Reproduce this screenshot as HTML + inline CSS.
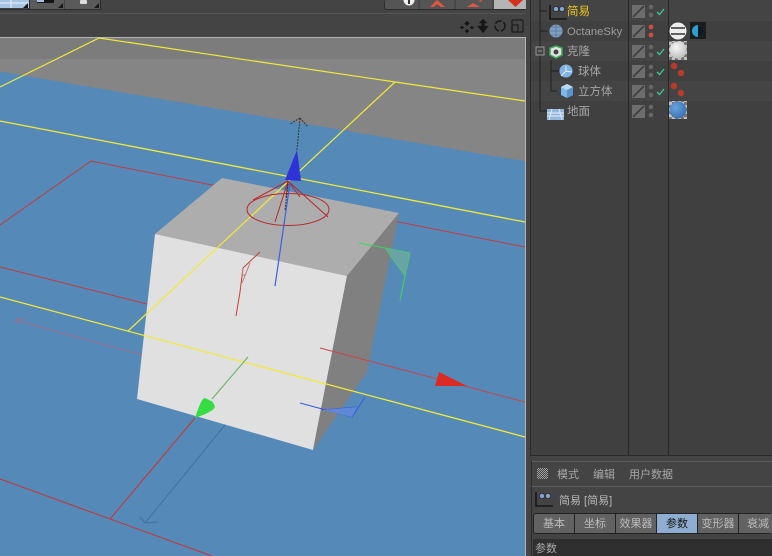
<!DOCTYPE html>
<html><head><meta charset="utf-8"><style>
html,body{margin:0;padding:0;background:#3c3c3c}
svg{display:block;font-family:"Liberation Sans","Noto Sans CJK SC",sans-serif}
</style></head><body>
<svg width="772" height="556" viewBox="0 0 772 556" xmlns="http://www.w3.org/2000/svg">
<defs>
<g id="check"><path d="M0 3l2.500 2.500L7 0" fill="none" stroke="#3fc79a" stroke-width="1.300"/></g>
<g id="lay"><rect width="13" height="13" fill="#6d6d6d"/><path d="M1 12L12 1" stroke="#3c3c3c" stroke-width="1.600"/></g>
<g id="dots"><circle cx="0" cy="0" r="2.300" fill="#666"/><circle cx="0" cy="8" r="2.300" fill="#666"/></g>
<g id="reds"><circle cx="0" cy="0" r="3.200" fill="#b93a28"/><circle cx="7" cy="7" r="3.200" fill="#b93a28"/></g>
<g id="simple"><path d="M0 0V14H17" fill="none" stroke="#161616" stroke-width="1.600"/><circle cx="6" cy="4" r="2.600" fill="#7fa5cf" stroke="#222" stroke-width=".7"/><circle cx="12" cy="4" r="2.600" fill="#7fa5cf" stroke="#222" stroke-width=".7"/></g>
<radialGradient id="ws" cx=".4" cy=".35" r=".7"><stop offset="0" stop-color="#f6f6f6"/><stop offset="1" stop-color="#bdbdbd"/></radialGradient>
<radialGradient id="bs" cx=".35" cy=".35" r=".75"><stop offset="0" stop-color="#66a2e2"/><stop offset="1" stop-color="#3a6ea8"/></radialGradient>
<pattern id="chk" width="6" height="6" patternUnits="userSpaceOnUse"><rect width="6" height="6" fill="#c0c0c0"/><rect width="3" height="3" fill="#777"/><rect x="3" y="3" width="3" height="3" fill="#777"/></pattern>
<pattern id="p" width="2" height="2" patternUnits="userSpaceOnUse"><rect width="1" height="1" fill="#a0a0a0"/><rect x="1" y="1" width="1" height="1" fill="#a0a0a0"/></pattern>
</defs>

<!-- top bar -->
<rect width="527" height="37" fill="#444"/>
<rect y="9" width="102" height="1" fill="#2e2e2e"/>
<rect y="13" width="527" height="1" fill="#555"/>
<rect x="0" width="29" height="8" fill="#a8c4e4"/>
<path d="M11 0V8M0 3H29" stroke="#eaf2fb" stroke-width="1"/>
<path d="M23 8l5-5v5z" fill="#181818"/>
<rect x="29" width="1" height="9" fill="#2c2c2c"/>
<rect x="30" width="34" height="9" fill="#5a5a5a"/>
<rect x="37" width="17" height="3" fill="#151515"/><rect x="37" width="7" height="2" fill="#a8c4e4"/>
<path d="M58 8l5-5v5z" fill="#181818"/>
<rect x="65" width="35" height="9" fill="#5a5a5a"/>
<rect x="80" width="7" height="4" rx="1" fill="#ddd"/>
<path d="M94 8l5-5v5z" fill="#181818"/>
<rect x="100" width="1" height="9" fill="#2c2c2c"/>

<rect x="384" width="143" height="10" rx="3" fill="#2c2c2c"/>
<rect x="385" width="141" height="9" rx="2" fill="#555"/>
<path d="M419 0v9M455 0v9M493 0v9" stroke="#3a3a3a"/>
<circle cx="409" cy="0" r="5.500" fill="#f0f0f0"/><rect x="408" y="0" width="2" height="4" fill="#333"/>
<path d="M430 7l7-7 8 7h-4l-4-3-3 3z" fill="#e5553f"/>
<path d="M467 7l6-4 7 4zM478 1l4-1v2z" fill="#d95a42"/>
<rect x="494" width="32" height="9" fill="#b5b5b5"/>
<path d="M508 0h15l-7.500 7z" fill="#d6301f"/>

<!-- viewport header icons -->
<g fill="#161616" stroke="#161616">
<path d="M467 21l2.500 2.500L467 26l-2.500-2.500zM467 29l2 2-2 2-2-2zM462 26l2 1.500-2 1.500-2-1.500zM472 26l2 1.500-2 1.500-2-1.500z" stroke-width=".4"/>
<path d="M483 19l4 4h-2.500v3h4L483 33l-5.500-7h4v-3H479z" stroke-width=".3"/>
</g>
<circle cx="500" cy="26" r="5" fill="none" stroke="#1c1c1c" stroke-width="1.700" stroke-dasharray="7 2"/>
<rect x="512" y="20" width="11" height="12" rx="1" fill="none" stroke="#1c1c1c" stroke-width="1.200"/>
<rect x="512" y="25" width="6" height="7" fill="none" stroke="#1c1c1c" stroke-width="1.200"/>

<!-- viewport -->
<rect x="0" y="37" width="526" height="519" fill="#5589b8"/>
<path d="M0 71.500L526 161.500V37H0z" fill="#858585"/>
<rect x="0" y="37" width="526" height="22" fill="#7c7c7c"/>
<rect x="0" y="37" width="526" height="1" fill="#b4b4b4"/>
<rect x="525" y="37" width="1" height="519" fill="#b4b4b4"/>

<!-- grid lines behind cube -->
<g fill="none" stroke-width="1">
<path d="M0 225L91 161L525 247" stroke="#c43a3a"/>
<path d="M0 267L147 304" stroke="#c43a3a"/>
<path d="M15 320L142 355M15 320l10-2M15 320l2 4" stroke="#9d6f8a"/>
<path d="M195 418L110 519" stroke="#c83434"/>
<path d="M0 479L212 556" stroke="#c83434"/>
<path d="M225 425L145 523" stroke="#44719f"/>
<path d="M145 523l-5-6M145 523l13-1" stroke="#44719f"/>
<path d="M0 87L99 38L395 82L525 101" stroke="#f2e93a" stroke-width="1.200"/>
<path d="M0 121L525 222" stroke="#f2e93a" stroke-width="1.300"/>
</g>

<!-- cube -->
<polygon points="222,178 399,213 347,276 155,234" fill="#adadad"/>
<polygon points="155,234 347,276 313,450 137,399" fill="#e0e0e0"/>
<polygon points="399,213 347,276 313,450 367,372" fill="#808080"/>

<g fill="none">
<path d="M395 82L128 331" stroke="#f2e93a" stroke-width="1.200"/>
<path d="M0 297L525 437" stroke="#f2e93a" stroke-width="1.300"/>
<!-- Red X axis -->
<path d="M320 348L525 402" stroke="#c9454a" stroke-width="1"/>
<!-- light cone -->
<ellipse cx="288" cy="209.500" rx="41" ry="16" stroke="#b5282a" stroke-width="1"/>
<path d="M288 181L253 200M288 181L275 222M288 181L300 197M288 181L328 217M288 181L286 198" stroke="#b5282a" stroke-width="1"/>
<!-- Y axis -->
<path d="M290 183L275 286" stroke="#3d5fe0" stroke-width="1.200"/>
<path d="M297 150L300 118M300 118l-10 6M300 118l8 9" stroke="#2b3a3a" stroke-width="1" stroke-dasharray="2 1"/>
<path d="M288 184L285 210" stroke="#333" stroke-width="1" stroke-dasharray="2 1"/>
<!-- rotation arcs -->
<path d="M260 252L243 268L240 292L236 316" stroke="#c2413c" stroke-width="1"/>
<path d="M250 263L242 283M243 268l-1 8 4-2" stroke="#c47a70" stroke-width="1"/>
<path d="M359 243L410 253L400 300M385 248L405 276" stroke="#3bd757" stroke-width="1"/>
<path d="M248 357L212 399" stroke="#6eb86e" stroke-width="1.200"/>
<path d="M300 403L352 417L365 397" stroke="#3858e0" stroke-width="1"/>
<path d="M322 410L357 407" stroke="#3858e0" stroke-width="1"/>
</g>
<polygon points="297,150 301,181 285,180" fill="#2e33d8"/>
<polygon points="385,248 410,253 405,276" fill="#6da8a0" opacity=".85"/>
<polygon points="322,410 357,407 352,417" fill="#6088d4"/>
<polygon points="439,372 467,386 435,386" fill="#da2c25"/>
<path d="M195 418C199 406 202 398 205 398L213 402L215 407C213 411 206 414 195 418z" fill="#35dc42"/>

<!-- right panel -->
<rect x="526" y="0" width="246" height="556" fill="#444"/>
<rect x="530" width="242" height="456" fill="#404040"/>
<rect x="530" width="1" height="456" fill="#2a2a2a"/>
<rect x="531" y="0" width="241" height="21" fill="#444"/>
<rect x="531" y="41" width="241" height="20" fill="#444"/>
<rect x="531" y="81" width="241" height="20" fill="#444"/>
<rect x="628" width="1" height="456" fill="#282828"/>
<rect x="668" width="1" height="456" fill="#282828"/>

<!-- tree lines -->
<g stroke="#202020" fill="none" stroke-width="1">
<path d="M540 0V47M540 55V111H548M540 11H547M540 31H547"/>
<path d="M551 60V91H557M551 71H559"/>
<rect x="536" y="47" width="8" height="8" stroke="#999"/>
<path d="M538 51H542" stroke="#999"/>
</g>

<!-- Objects -->
<use href="#simple" x="550" y="5"/>
<circle cx="556" cy="31" r="6.500" fill="#7e9fc4"/>
<path d="M550 31H562M556 24.500V37.500M551 27H561M551 35H561" stroke="#5d7899" stroke-width=".8"/>
<polygon points="556,46 562,48 562,55 556,58 550,55 550,48" fill="#e2e2e2" stroke="#31a956" stroke-width="1.500"/>
<circle cx="556" cy="52" r="2.500" fill="#444"/>
<circle cx="566" cy="71" r="6.500" fill="#80b3e6"/>
<path d="M566 71V66M566 71L572 72M566 71L561 76" stroke="#eef" stroke-width="1"/>
<polygon points="567,84 573,87 573,95 567,98 561,95 561,87" fill="#7db6e8"/>
<polygon points="567,84 573,87 567,90 561,87" fill="#bcdaf4"/>
<polygon points="567,90 573,87 573,95 567,98" fill="#5d94c9"/>
<polygon points="547,109 564,109 564,120 547,120" fill="#92b8de"/>
<path d="M547 113H564M547 116H564M552 109L549 120M559 109L562 120" stroke="#e4eef8" stroke-width=".9"/>

<g font-size="11.500" fill="#a5a5a5">
<text x="567" y="15" fill="#f0c820">简易</text>
<text x="567" y="35" font-size="11.300" fill="#9c9c9c">OctaneSky</text>
<text x="567" y="55">克隆</text>
<text x="578" y="75">球体</text>
<text x="578" y="95">立方体</text>
<text x="567" y="115">地面</text>
</g>

<!-- layer + dots -->
<use href="#lay" x="632" y="5"/><use href="#lay" x="632" y="25"/><use href="#lay" x="632" y="45"/><use href="#lay" x="632" y="65"/><use href="#lay" x="632" y="85"/><use href="#lay" x="632" y="105"/>
<use href="#dots" x="651" y="7"/>
<circle cx="651" cy="27" r="2.400" fill="#c8503f"/><circle cx="651" cy="35" r="2.400" fill="#c8503f"/>
<use href="#dots" x="651" y="47"/><use href="#dots" x="651" y="67"/><use href="#dots" x="651" y="87"/><use href="#dots" x="651" y="107"/>
<use href="#check" x="657" y="9"/><use href="#check" x="657" y="49"/><use href="#check" x="657" y="69"/><use href="#check" x="657" y="89"/>

<!-- tags -->
<circle cx="678" cy="31" r="8.500" fill="#ededed"/>
<path d="M671 28H685M671 34H685" stroke="#333" stroke-width="1.500"/>
<rect x="690" y="22" width="16" height="17" fill="#1c1c1c"/>
<circle cx="698" cy="31" r="6" fill="#2d9fd0"/>
<path d="M698 25a6 6 0 0 1 0 12z" fill="#101820"/>
<rect x="669" y="41" width="18" height="19" fill="url(#chk)"/>
<circle cx="678" cy="50" r="8.500" fill="url(#ws)"/>
<use href="#reds" x="674" y="66"/>
<use href="#reds" x="674" y="86"/>
<rect x="669" y="101" width="18" height="18" fill="url(#chk)"/>
<circle cx="678" cy="110" r="8.500" fill="url(#bs)"/>

<!-- attribute panel -->
<rect x="526" y="456" width="246" height="100" fill="#444"/>
<rect x="530" y="455" width="242" height="1" fill="#2a2a2a"/>
<rect x="531" y="461" width="241" height="1" fill="#5c5c5c"/>
<rect x="531" y="486" width="241" height="1" fill="#5c5c5c"/>
<rect x="531" y="461" width="1" height="95" fill="#2c2c2c"/>
<rect x="537" y="468" width="11" height="11" fill="url(#p)"/>
<g font-size="11" fill="#a8a8a8">
<text x="557" y="478">模式</text>
<text x="593" y="478">编辑</text>
<text x="629" y="478">用户数据</text>
</g>
<use href="#simple" x="536" y="492"/>
<text x="559" y="504" font-size="11" fill="#b8b8b8">简易 [简易]</text>
<!-- tabs -->
<rect x="533" y="513" width="239" height="21" rx="3" fill="#222"/>
<path d="M536 514H574V533H536a2 2 0 0 1-2-2V516a2 2 0 0 1 2-2z" fill="#626262"/>
<rect x="575" y="514" width="40" height="19" fill="#626262"/>
<rect x="616" y="514" width="40" height="19" fill="#626262"/>
<rect x="657" y="514" width="40" height="19" fill="#8fadd0"/>
<rect x="698" y="514" width="40" height="19" fill="#626262"/>
<rect x="739" y="514" width="33" height="19" fill="#626262"/>
<g font-size="11" fill="#bcbcbc" text-anchor="middle">
<text x="554" y="527">基本</text>
<text x="595" y="527">坐标</text>
<text x="636" y="527">效果器</text>
<text x="677" y="527" fill="#151515">参数</text>
<text x="718" y="527">变形器</text>
<text x="758" y="527">衰减</text>
</g>
<rect x="533" y="539" width="239" height="17" fill="#2f2f2f"/>
<text x="535" y="552" font-size="11" fill="#aaa">参数</text>
</svg>
</body></html>
